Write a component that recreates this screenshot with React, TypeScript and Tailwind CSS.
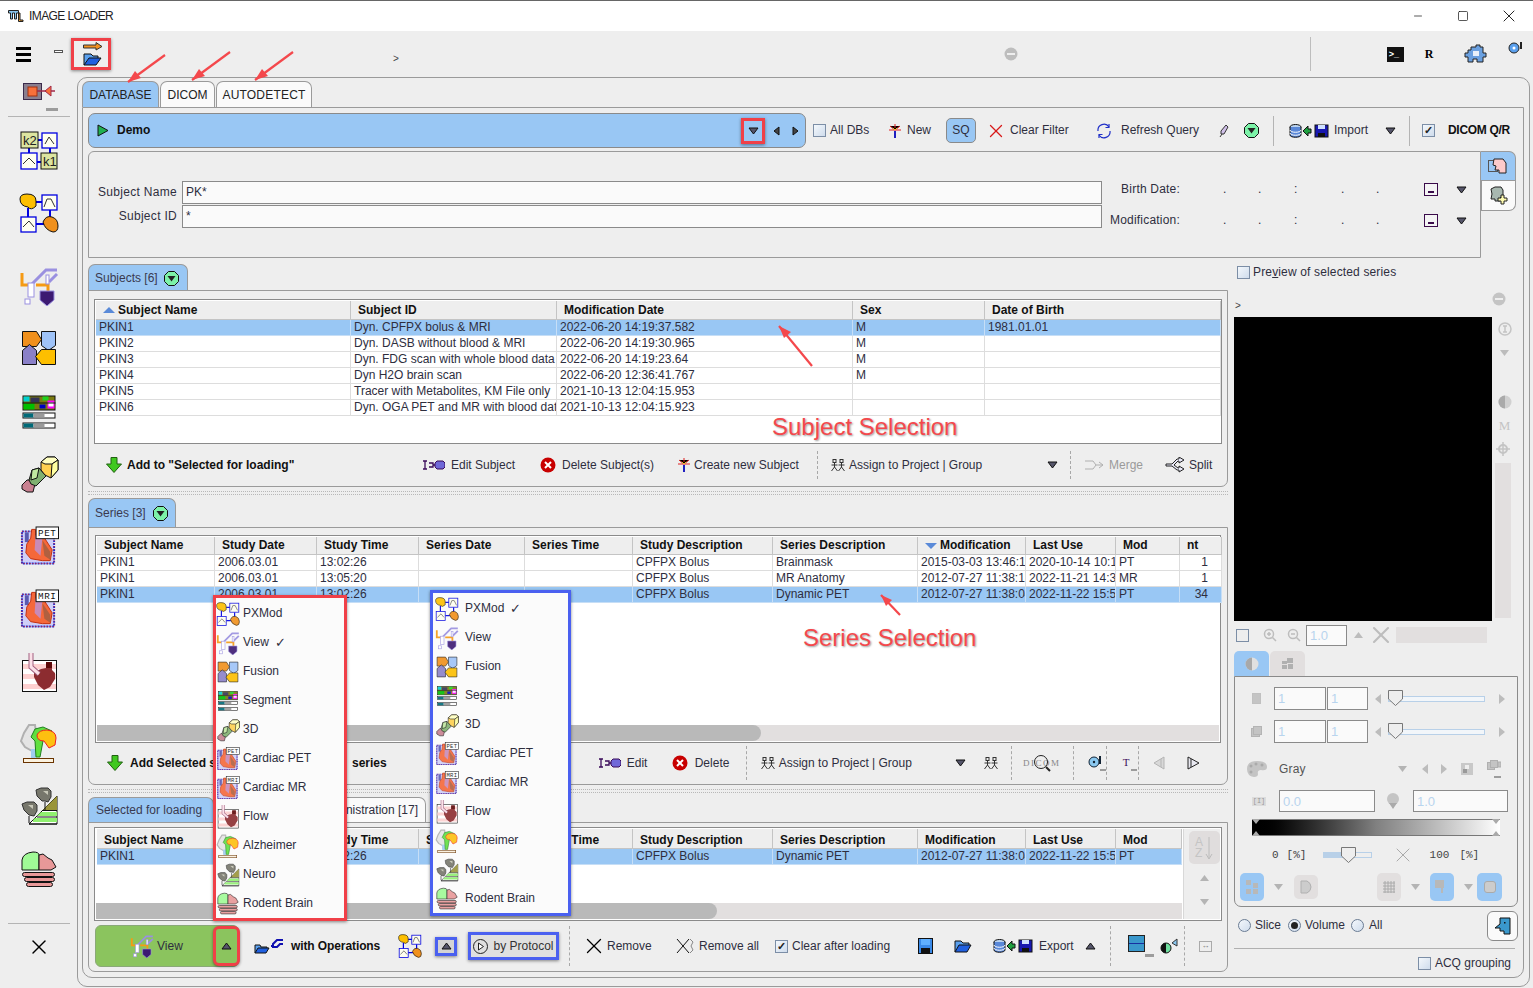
import { Minus, Square, X } from "lucide-react";
import type { ReactNode } from "react";

type IconProps = { s?: number };

/* ---------- module icons (drawn on a 40x40 box) ---------- */

function KinIcon({ s = 40 }: IconProps) {
  return (
    <svg width={s} height={s} viewBox="0 0 40 40">
      <path d="M18 10H23M10 18V24M31 18V24M18 32H23" stroke="#0000e0" strokeWidth="2" />
      <rect x="2" y="2" width="17" height="16" fill="#dde5a0" stroke="#111" />
      <rect x="23" y="3" width="15" height="15" fill="#fffff0" stroke="#0000e0" strokeWidth="1.3" />
      <rect x="2" y="23" width="16" height="16" fill="#fffff0" stroke="#0000e0" strokeWidth="1.3" />
      <rect x="22" y="23" width="16" height="16" fill="#dde5a0" stroke="#111" />
      <path d="M26 14L30 7L35 14M4 34L10 28L16 34" fill="none" stroke="#333" />
      <text x="4" y="15" fontSize="13" fontFamily="Liberation Sans" fill="#222">k2</text>
      <text x="24" y="36" fontSize="13" fontFamily="Liberation Sans" fill="#222">k1</text>
    </svg>
  );
}

function PxModIcon({ s = 40 }: IconProps) {
  return (
    <svg width={s} height={s} viewBox="0 0 40 40">
      <path d="M17 9H24M9 15V25M31 17V25M17 31H25" stroke="#0000e0" strokeWidth="2" />
      <path d="M1 6Q1 1 8 1Q17 1 17 8L17 13Q12 18 9 14Q1 13 1 6Z" fill="#fdbf00" stroke="#111" />
      <rect x="23" y="2" width="15" height="15" fill="#fffff0" stroke="#0000e0" strokeWidth="1.3" />
      <rect x="2" y="24" width="15" height="15" fill="#fffff0" stroke="#0000e0" strokeWidth="1.3" />
      <path d="M25 14L28 6H32L36 14M4 34L10 28L15 34" fill="none" stroke="#333" />
      <path d="M24 29Q27 22 33 24Q39 26 39 33Q39 39 34 39Q26 37 24 29Z" fill="#f0901c" stroke="#111" />
    </svg>
  );
}

function ViewIcon({ s = 40 }: IconProps) {
  return (
    <svg width={s} height={s} viewBox="0 0 40 40">
      <path d="M3 7V19H12M17 19H29V26" fill="none" stroke="#f59a14" strokeWidth="3" />
      <path d="M12 19L27 4H38" fill="none" stroke="#9a90e0" strokeWidth="3" />
      <path d="M38 8L30 16" stroke="#9a90e0" strokeWidth="3" />
      <rect x="9" y="17" width="6" height="14" fill="#fff" stroke="#9a90e0" />
      <rect x="27" y="9" width="3" height="9" fill="#fff" stroke="#9a90e0" />
      <rect x="6" y="33" width="5" height="5" fill="#fff" stroke="#9a90e0" />
      <path d="M21 25H35V34L28 40L21 34Z" fill="#3c1a72" stroke="#9a90e0" />
    </svg>
  );
}

function FusionIcon({ s = 40 }: IconProps) {
  return (
    <svg width={s} height={s} viewBox="-3.5 -3.5 40 40">
      <g stroke="#111">
        <path d="M0 0H14L19 8L14 15H0Z" fill="#f0901c" />
        <path d="M19 0H33V14L26 19L19 14Z" fill="#9fc3f8" />
        <path d="M0 19L7 13L14 19V33H0Z" fill="#8a80c8" />
        <path d="M19 18H33V33H19L13 25Z" fill="#fdbf00" />
      </g>
    </svg>
  );
}

function SegmentIcon({ s = 40 }: IconProps) {
  return (
    <svg width={s} height={s} viewBox="-3.5 -3.5 40 40">
      <rect x="0.5" y="0.5" width="32" height="14" fill="#7a7a10" stroke="#111" />
      <rect x="1" y="1" width="6" height="5" fill="#00d0d0" />
      <rect x="8" y="2" width="9" height="5" fill="#335" />
      <rect x="20" y="1" width="6" height="4" fill="#20d020" />
      <rect x="25" y="5" width="7" height="8" fill="#f0f" />
      <rect x="26" y="7" width="5" height="4" fill="#fff" />
      <rect x="1" y="8" width="11" height="6" fill="#00c000" />
      <rect x="17" y="9" width="6" height="4" fill="#0000c0" />
      <path d="M0 7.5H33" stroke="#111" />
      <g stroke="#111">
        <rect x="0.5" y="17.5" width="32" height="5" fill="#fff" />
        <rect x="0.5" y="27.5" width="32" height="5" fill="#fff" />
      </g>
      <rect x="1" y="18" width="10" height="4" fill="#006a78" />
      <rect x="11" y="18" width="11" height="4" fill="#9a9a9a" />
      <rect x="1" y="28" width="10" height="4" fill="#006a78" />
      <rect x="11" y="28" width="11" height="4" fill="#9a9a9a" />
    </svg>
  );
}

function ThreeDIcon({ s = 40 }: IconProps) {
  return (
    <svg width={s} height={s} viewBox="0 0 40 40">
      <g stroke="#111">
        <path d="M3 31L8 26H12L16 30L14 38H8L3 35Z" fill="#c88090" />
        <path d="M10 26L13 16L20 14L27 22L17 32L12 30Z" fill="#80b070" />
        <path d="M13 16L20 14L18 24L12 26Z" fill="#c0e8a0" />
        <path d="M22 8L28 3H36L39 6V16L32 24L26 21L22 16Z" fill="#ffd050" />
        <path d="M22 8L28 3H36L39 6L33 10L26 10Z" fill="#ffffc0" />
        <path d="M33 10L39 6V16L32 24Z" fill="#ffffa0" />
      </g>
    </svg>
  );
}

function HeartBody() {
  return (
    <g>
      <rect x="3" y="5" width="33" height="33" fill="#cfcff8" stroke="#2030d0" strokeWidth="2" strokeDasharray="2 1" />
      <rect x="3" y="5" width="33" height="33" fill="none" stroke="#e02020" strokeWidth="1" strokeDasharray="1 2" />
      <rect x="6" y="6" width="4" height="10" fill="#5a5ab0" />
      <path d="M13 3H17V12L25 10L34 24L32 35H24L12 33L7 27L8 18L12 12Z" fill="#f5683a" stroke="#c03010" />
      <path d="M17 9L24 12L22 30L16 24Z" fill="#c88ab8" />
      <path d="M24 14L32 26V34L26 30Z" fill="#b06040" />
    </g>
  );
}

function CardiacIcon({ s = 40, label }: IconProps & { label: string }) {
  return (
    <svg width={s} height={s} viewBox="0 0 41 40">
      <HeartBody />
      <rect x="17.5" y="0.5" width="23" height="12" fill="#fff" stroke="#111" />
      <text x="29" y="10" textAnchor="middle" fontSize="9.5" letterSpacing="0.6" fontFamily="Liberation Mono" fill="#111">{label}</text>
    </svg>
  );
}

function FlowIcon({ s = 40 }: IconProps) {
  return (
    <svg width={s} height={s} viewBox="0 0 40 40">
      <rect x="3.5" y="7.5" width="34" height="31" fill="#fff" stroke="#111" />
      <path d="M4 11H37V16H4ZM4 21H37V26H4ZM4 31H37V36H4Z" fill="#fdd0d0" />
      <path d="M15 19L22 16L27 15V9H33V17L36 20V26L31 34L25 37L19 32L15 24Z" fill="#8c2c30" />
      <rect x="27" y="9" width="6" height="6" fill="#5c0808" />
      <path d="M12 0V14L20 21" fill="none" stroke="#a06080" strokeWidth="5" />
      <path d="M12 0V14L20 21" fill="none" stroke="#fbe0e8" strokeWidth="3" />
    </svg>
  );
}

function AlzIcon({ s = 40 }: IconProps) {
  return (
    <svg width={s} height={s} viewBox="0 0 40 40">
      <path d="M10 2H16L20 32H13V28L6 24L2 18L5 10Z" fill="#e4e4e4" stroke="#b0b0b0" strokeWidth="2" />
      <rect x="12" y="26" width="5" height="9" fill="#a0ccf0" />
      <path d="M16 6L24 4L33 8L24 18L21 34H17L16 18L12 14Z" fill="#60e040" stroke="#208020" />
      <path d="M18 12Q20 7 28 7Q37 8 37 15L36 22L30 25L25 18Q18 18 18 12Z" fill="#fdc010" stroke="#f02020" />
      <rect x="4.5" y="35.5" width="30" height="4" fill="#fbf2e0" stroke="#6a3400" />
    </svg>
  );
}

function NeuroIcon({ s = 40 }: IconProps) {
  return (
    <svg width={s} height={s} viewBox="-2 0 40 40">
      <path d="M8 38L36 10V38Z" fill="#fff" stroke="#111" />
      <path d="M22 24L36 10V24Z" fill="#9a9438" />
      <path d="M20 26H36V30H16ZM12 34L14 32H36V36H12Z" fill="#90f070" />
      <path d="M8 38H36M16 31H36M22 24.5H36" stroke="#111" />
      <path d="M24 16V24M8 30V37" stroke="#111" />
      <path d="M15 4L20 2H27L30 5V11L27 16L24 15L21 15L16 10Z" fill="#77776c" stroke="#333" />
      <path d="M1 18L6 16H13L16 19V25L13 30L8 29L3 24Z" fill="#77776c" stroke="#333" />
      <path d="M22 5H27V9ZM7 19H12V23Z" fill="#c8c8b8" />
    </svg>
  );
}

function RodentIcon({ s = 40 }: IconProps) {
  return (
    <svg width={s} height={s} viewBox="0 0 40 40">
      <path d="M3 20V10Q4 3 14 2Q20 2 20 5L20 20Z" fill="#a0fa96" stroke="#111" />
      <path d="M20 5L24 4L29 8L33 10L37 17L32 20H20Z" fill="#e89898" stroke="#111" />
      <g fill="#e89898" stroke="#111">
        <rect x="3.5" y="22.5" width="32" height="4" rx="2" />
        <rect x="5.5" y="27.5" width="30" height="4" rx="2" />
        <rect x="7.5" y="32.5" width="26" height="4" rx="2" />
      </g>
    </svg>
  );
}

function ImportModuleIcon() {
  return (
    <svg width="34" height="20" viewBox="0 0 34 20">
      <rect x="0.5" y="0.5" width="18" height="16" fill="#8a7f8f" stroke="#3a2a4a" />
      <rect x="5" y="4" width="9" height="9" fill="#f8703a" stroke="#a03010" />
      <path d="M14 8H32" stroke="#a02848" strokeWidth="1.5" />
      <path d="M22 8L28 3V13Z" fill="#f8703a" stroke="#a02848" />
    </svg>
  );
}

/* ---------- small toolbar icons ---------- */

function Tri({ up, cls = "fill-[#55556a] stroke-[#111]" }: { up?: boolean; cls?: string }) {
  return (
    <svg width="11" height="8" viewBox="0 0 11 8" className={cls}>
      <path d={up ? "M1 7H10L5.5 1Z" : "M1 1H10L5.5 7Z"} />
    </svg>
  );
}

function GreenDown() {
  return (
    <svg width="15" height="15" viewBox="0 0 15 15">
      <path d="M4.5 0.5H10.5L14.5 4.5V10.5L10.5 14.5H4.5L0.5 10.5V4.5Z" fill="#7cf2a8" stroke="#111" />
      <path d="M3.5 5H11.5L7.5 10.5Z" fill="#222" />
    </svg>
  );
}

function StarNew() {
  return (
    <svg width="12" height="14" viewBox="0 0 12 14">
      <path d="M6 7V14" stroke="#2020c0" strokeWidth="2" />
      <path d="M6 0V6M1 2L6 6L11 2M0 6H12" stroke="#e02020" />
      <path d="M4 4L6 6L8 4" stroke="#f0c020" />
    </svg>
  );
}

function EditPlug() {
  return (
    <svg width="23" height="10" viewBox="0 0 23 10">
      <path d="M1 1H5M3 1V9M1 9H5M7 3H11V7H7M11 5H13" fill="none" stroke="#3a0a5a" strokeWidth="1.3" />
      <path d="M13 3L15 1H21L23 3V7L21 9H15L13 7Z" fill="#7068d8" stroke="#3a0a5a" />
    </svg>
  );
}

function DeleteRed() {
  return (
    <svg width="16" height="16" viewBox="0 0 16 16">
      <circle cx="8" cy="8" r="7.5" fill="#c80000" />
      <path d="M5 5L11 11M11 5L5 11" stroke="#fff" strokeWidth="2" />
    </svg>
  );
}

function Persons() {
  return (
    <svg width="14" height="13" viewBox="0 0 14 13" fill="none" stroke="#333">
      <rect x="2" y="0.5" width="3" height="3" />
      <rect x="9" y="0.5" width="3" height="3" />
      <path d="M3.5 4V8M0.5 12L3.5 8L6.5 12M0.5 6H6.5M10.5 4V8M7.5 12L10.5 8L13.5 12M7.5 6H13.5" />
    </svg>
  );
}

function GreenArrowDown() {
  return (
    <svg width="16" height="16" viewBox="0 0 16 16">
      <path d="M5 0.5H11V7H15.5L8 15.5L0.5 7H5Z" fill="#40c820" stroke="#206010" />
    </svg>
  );
}

function DbToSave() {
  return (
    <svg width="40" height="14" viewBox="0 0 40 14">
      <ellipse cx="6.5" cy="3" rx="5.5" ry="2.5" fill="#bcd4f0" stroke="#111" />
      <path d="M1 3V11C1 14 12 14 12 11V3" fill="#5a88d8" stroke="#111" />
      <path d="M1 6C1 9 12 9 12 6M1 9C1 12 12 12 12 9" fill="none" stroke="#fff" />
      <path d="M14 7L19 2V5H22V9H19V12Z" fill="#20a040" stroke="#111" />
      <rect x="26" y="1" width="13" height="12" fill="#1818b0" stroke="#111" />
      <rect x="29" y="1" width="7" height="4" fill="#cfe0ff" />
      <rect x="29" y="9" width="7" height="4" fill="#111" />
    </svg>
  );
}

function SaveIcon() {
  return (
    <svg width="15" height="16" viewBox="0 0 15 16">
      <rect x="0.5" y="0.5" width="14" height="15" fill="#3a8ae8" stroke="#111" />
      <rect x="3" y="1" width="9" height="6" fill="#60b0ff" />
      <rect x="3" y="10" width="9" height="5" fill="#111" />
    </svg>
  );
}

function FolderIcon({ w = 18, h = 14 }: { w?: number; h?: number }) {
  return (
    <svg width={w} height={h} viewBox="0 0 18 14">
      <path d="M1 13V2H7L9 4H15V7" fill="#5aa0ee" stroke="#111" />
      <path d="M1 13L5 6H17L13 13Z" fill="#2060e0" stroke="#111" />
    </svg>
  );
}

function MainOpenIcon() {
  return (
    <svg width="20" height="24" viewBox="0 0 20 24">
      <path d="M0.5 3H13V0.5L19 4.5L13 8V6H0.5Z" fill="#f09020" stroke="#333" />
      <path d="M1 23V12H8L10 14H15V17" fill="#5aa0ee" stroke="#111" />
      <path d="M1 23L6 16H18L13 23Z" fill="#2060e0" stroke="#111" />
    </svg>
  );
}

function AppLogo() {
  return (
    <svg width="16" height="12" viewBox="0 0 16 12" fill="#8ac4ec" stroke="#222">
      <path d="M0.5 0.5H10.5V3H8.5V9H6.5V3H4.5V9H2.5V3H0.5Z" />
      <path d="M10.5 3H12V10H15V11.5H10.5Z" fill="#f5a030" />
    </svg>
  );
}

/* ---------- form bits ---------- */

function Check({ on }: { on?: boolean }) {
  return (
    <span className="flex h-[13px] w-[13px] shrink-0 items-center justify-center border border-[#7c8ea6] bg-gradient-to-br from-[#f4f8fc] to-[#cfdcec] text-[11px] font-bold leading-none text-[#222]">
      {on ? "✓" : ""}
    </span>
  );
}

function Radio({ on }: { on?: boolean }) {
  return (
    <span className="flex h-[13px] w-[13px] shrink-0 items-center justify-center rounded-full border border-[#6a7c94] bg-gradient-to-br from-[#f4f8fc] to-[#cfdcec]">
      {on ? <span className="h-[7px] w-[7px] rounded-full bg-[#222]" /> : null}
    </span>
  );
}

function NumInput({ value, cls }: { value: string; cls: string }) {
  return (
    <span className={`flex items-center border border-[#8a8a8a] bg-[#fafafa] pl-[3px] text-[13px] text-[#b8d4ee] ${cls}`}>
      {value}
    </span>
  );
}

function Slider({ w = "w-[97px]" }: { w?: string }) {
  return (
    <span className={`relative flex h-[18px] items-center ${w}`}>
      <span className="h-[6px] w-full border border-[#b8d0e8] bg-[#f2f6fa]" />
      <svg width="15" height="16" viewBox="0 0 15 16" className="absolute left-0 top-0">
        <path d="M0.5 0.5H14.5V9L7.5 15.5L0.5 9Z" fill="#eeeeee" stroke="#777" />
      </svg>
    </span>
  );
}

/* ---------- tables ---------- */

function HeadCell({ children, sort, h }: { children?: ReactNode; sort?: "up" | "down"; h: string }) {
  return (
    <div className={`flex items-center overflow-hidden whitespace-nowrap border-b border-r border-[#c4c4c4] bg-[#eeeeee] pl-[7px] font-bold text-[#111] ${h}`}>
      {sort ? (
        <svg width="12" height="8" viewBox="0 0 12 8" className="mr-[3px] shrink-0 fill-[#5a8ad8]">
          <path d={sort === "up" ? "M0 7H12L6 1Z" : "M0 1H12L6 7Z"} />
        </svg>
      ) : null}
      {children}
    </div>
  );
}

function Cell({ children, sel, cls = "pr-px" }: { children?: ReactNode; sel?: boolean; cls?: string }) {
  return (
    <div
      className={`h-[16px] overflow-hidden whitespace-nowrap border-b border-r pl-[3px] leading-[15px] ${cls} ${
        sel ? "border-[#c6def6] bg-[#99c7f4]" : "border-[#dddddd] bg-white"
      }`}
    >
      {children}
    </div>
  );
}

const subjects = [
  ["PKIN1", "Dyn. CPFPX bolus & MRI", "2022-06-20 14:19:37.582", "M", "1981.01.01"],
  ["PKIN2", "Dyn. DASB without blood & MRI", "2022-06-20 14:19:30.965", "M", ""],
  ["PKIN3", "Dyn. FDG scan with whole blood data", "2022-06-20 14:19:23.64", "M", ""],
  ["PKIN4", "Dyn H2O brain scan", "2022-06-20 12:36:41.767", "M", ""],
  ["PKIN5", "Tracer with Metabolites, KM File only", "2021-10-13 12:04:15.953", "", ""],
  ["PKIN6", "Dyn. OGA PET and MR with blood data", "2021-10-13 12:04:15.923", "", ""],
];

const series = [
  ["PKIN1", "2006.03.01", "13:02:26", "", "", "CPFPX Bolus", "Brainmask", "2015-03-03 13:46:13", "2020-10-14 10:11", "PT", "1"],
  ["PKIN1", "2006.03.01", "13:05:20", "", "", "CPFPX Bolus", "MR Anatomy", "2012-07-27 11:38:13", "2022-11-21 14:33", "MR", "1"],
  ["PKIN1", "2006.03.01", "13:02:26", "", "", "CPFPX Bolus", "Dynamic PET", "2012-07-27 11:38:04", "2022-11-22 15:50", "PT", "34"],
];

function SubjectTable() {
  const heads = ["Subject Name", "Subject ID", "Modification Date", "Sex", "Date of Birth"];
  return (
    <div className="h-[145px] border border-[#8a8a8a] bg-white p-px">
      <div className="grid grid-cols-[255px_206px_296px_132px_236px]">
        {heads.map((h, i) => (
          <HeadCell key={h} h="h-[19px]" sort={i === 0 ? "up" : undefined}>{h}</HeadCell>
        ))}
        {subjects.map((row, r) =>
          row.map((c, i) => <Cell key={`${r}-${i}`} sel={r === 0}>{c}</Cell>)
        )}
      </div>
    </div>
  );
}

function Scrollbar({ thumb }: { thumb: string }) {
  return (
    <div className="h-[16px] bg-[#e2dfdf]">
      <div className={`h-full rounded-r-full bg-[#b9b9b9] ${thumb}`} />
    </div>
  );
}

function SeriesTable() {
  const heads = ["Subject Name", "Study Date", "Study Time", "Series Date", "Series Time", "Study Description", "Series Description", "Modification", "Last Use", "Mod", "nt"];
  return (
    <div className="flex h-[208px] flex-col border border-[#8a8a8a] bg-white p-px">
      <div className="grid grid-cols-[118px_102px_102px_106px_108px_140px_145px_108px_90px_64px_42px]">
        {heads.map((h) => (
          <HeadCell key={h} h="h-[18px]" sort={h === "Modification" ? "down" : undefined}>{h}</HeadCell>
        ))}
        {series.map((row, r) =>
          row.map((c, i) => (
            <Cell key={`${r}-${i}`} sel={r === 2} cls={i === 10 ? "pr-[13px] text-right" : "pr-px"}>{c}</Cell>
          ))
        )}
      </div>
      <div className="flex-1" />
      <Scrollbar thumb="w-[664px]" />
    </div>
  );
}

function LoadTable() {
  const heads = ["Subject Name", "Study Date", "Study Time", "Series Date", "Series Time", "Study Description", "Series Description", "Modification", "Last Use", "Mod"];
  const row = ["PKIN1", "2006.03.01", "13:02:26", "", "", "CPFPX Bolus", "Dynamic PET", "2012-07-27 11:38:04", "2022-11-22 15:50", "PT"];
  return (
    <div className="flex h-[94px] border border-[#8a8a8a] bg-white p-px">
      <div className="flex w-[1086px] flex-col">
        <div className="grid grid-cols-[118px_102px_102px_106px_108px_140px_145px_108px_90px_66px] pl-px">
          {heads.map((h) => <HeadCell key={h} h="h-[20px] pt-[3px]">{h}</HeadCell>)}
          {row.map((c, i) => <Cell key={i} sel>{c}</Cell>)}
        </div>
        <div className="flex-1" />
        <Scrollbar thumb="w-[621px]" />
      </div>
      <div className="ml-[1px] flex flex-1 flex-col items-center border-l border-[#d8d8d8] bg-[#eeeeee] pl-[4px] pt-[2px]">
        <div className="flex h-[33px] w-[31px] items-center justify-center rounded-[5px] bg-[#e0dddd]">
          <span className="flex flex-col text-[12px] leading-[11px] text-[#c4c4c4]">
            <span>A</span>
            <span>Z</span>
          </span>
          <svg width="8" height="24" viewBox="0 0 8 24" fill="none" stroke="#bcbcbc" className="ml-[2px]">
            <path d="M4 1V22M1 18L4 23L7 18" />
          </svg>
        </div>
        <span className="mt-[10px] flex"><Tri up cls="fill-[#b4b4b4]" /></span>
        <span className="mt-[16px] flex"><Tri cls="fill-[#b4b4b4]" /></span>
      </div>
    </div>
  );
}

/* ---------- app parts ---------- */

function TabBlue({ children, cls = "" }: { children: ReactNode; cls?: string }) {
  return (
    <div className={`flex items-center rounded-t-[7px] border border-b-0 border-[#9a9a9a] bg-[#99c7f4] ${cls}`}>
      {children}
    </div>
  );
}

function TabWhite({ children, cls = "" }: { children: ReactNode; cls?: string }) {
  return (
    <div className={`flex items-center rounded-t-[7px] border border-b-0 border-[#9a9a9a] bg-[#fafafa] ${cls}`}>
      {children}
    </div>
  );
}

function Splitter({ cls }: { cls: string }) {
  return (
    <div className={`flex items-center ${cls}`}>
      <div className="h-[4px] w-full border-b border-t border-dotted border-[#b8b8b8]" />
    </div>
  );
}

function Sep({ cls = "h-[34px]" }: { cls?: string }) {
  return <div className={`w-0 border-l border-dashed border-[#a8a8a8] ${cls}`} />;
}

function Dash({ cls = "" }: { cls?: string }) {
  return <span className={`block h-[3px] w-[8px] bg-[#9c9c9c] ${cls}`} />;
}

const moduleIcons = [
  { name: "PXMod", Icon: PxModIcon },
  { name: "View", Icon: ViewIcon },
  { name: "Fusion", Icon: FusionIcon },
  { name: "Segment", Icon: SegmentIcon },
  { name: "3D", Icon: ThreeDIcon },
  { name: "Cardiac PET", Icon: (p: IconProps) => <CardiacIcon {...p} label="PET" /> },
  { name: "Cardiac MR", Icon: (p: IconProps) => <CardiacIcon {...p} label="MRI" /> },
  { name: "Flow", Icon: FlowIcon },
  { name: "Alzheimer", Icon: AlzIcon },
  { name: "Neuro", Icon: NeuroIcon },
  { name: "Rodent Brain", Icon: RodentIcon },
];

function ModuleMenu({ cls, checked, iconCol }: { cls: string; checked: string; iconCol: string }) {
  return (
    <div className={`absolute flex flex-col border-[3px] bg-[#fbfbfb] pt-px shadow-[0_1px_3px_rgba(0,0,0,0.45)] ${cls}`}>
      {moduleIcons.map(({ name, Icon }) => (
        <div key={name} className="flex h-[29px] items-center">
          <span className={`flex shrink-0 items-center opacity-90 ${iconCol}`}>
            <Icon s={24} />
          </span>
          <span>{name}</span>
          {name === checked ? <span className="ml-[6px] text-[13px]">✓</span> : null}
        </div>
      ))}
    </div>
  );
}

function TitleBar() {
  return (
    <div className="flex h-[31px] shrink-0 items-center border-t border-[#666] bg-white pl-[8px] pr-[14px]">
      <AppLogo />
      <span className="ml-[5px] tracking-[-0.6px] text-[#222]">IMAGE LOADER</span>
      <span className="flex-1" />
      <Minus size={12} strokeWidth={1.4} className="text-[#111]" />
      <span className="ml-[33px]"><Square size={12} strokeWidth={1.4} className="text-[#111]" /></span>
      <span className="ml-[30px]"><X size={20} strokeWidth={1.1} className="text-[#111]" /></span>
    </div>
  );
}

function TopBar() {
  return (
    <div className="flex h-[46px] shrink-0 items-center pl-[16px]">
      <div className="flex w-[15px] flex-col gap-[3px]">
        <span className="h-[3px] bg-black" />
        <span className="h-[3px] bg-black" />
        <span className="h-[3px] bg-black" />
      </div>
      <span className="mb-[6px] ml-[23px] block h-[3px] w-[9px] border border-[#555] bg-white" />
      <div className="ml-[8px] flex h-[32px] w-[40px] items-center justify-center border-[3px] border-[#f04048] bg-[#eeeeee] pl-[4px] shadow-[0_1px_3px_rgba(0,0,0,0.45)]">
        <MainOpenIcon />
      </div>
      <span className="ml-[282px] mt-[9px] text-[10px] text-[#444]">&gt;</span>
      <svg width="14" height="14" viewBox="0 0 14 14" className="ml-[605px]">
        <circle cx="7" cy="7" r="6.5" fill="#bdbdbd" />
        <rect x="3" y="6" width="8" height="2" fill="#eee" />
      </svg>
      <div className="ml-[292px] h-[34px] w-0 border-l border-[#bdbdbd]" />
      <span className="ml-[76px] flex h-[15px] w-[17px] items-center bg-[#111] pl-[2px] text-[9px] font-bold leading-none text-white">&gt;_</span>
      <span className="ml-[21px] font-['Liberation_Serif',serif] text-[12px] font-bold text-black">R</span>
      <svg width="26" height="20" viewBox="0 0 26 20" className="ml-[29px]">
        <path d="M8 3H13V1H17V3H20V9H23V13H20V18H14V15H10V18H5V13H2V9H5V6H8Z" fill="#6aa0e0" stroke="#222" />
        <path d="M10 7H16V12H10Z" fill="#e8f0fa" />
      </svg>
      <svg width="16" height="16" viewBox="0 0 16 16" className="mb-[12px] ml-[19px]">
        <circle cx="6" cy="8" r="5" fill="#5aa0ee" stroke="#222" />
        <circle cx="6" cy="8" r="1.5" fill="#fff" />
        <rect x="12" y="2" width="2" height="7" fill="#222" />
      </svg>
    </div>
  );
}

function Sidebar() {
  return (
    <div className="flex w-[77px] shrink-0 flex-col items-center">
      <div className="flex h-[31px] w-full items-center pl-[23px]"><ImportModuleIcon /></div>
      <Dash cls="ml-[26px] !w-[12px]" />
      <div className="mt-[5px] h-px w-[62px] bg-[#b4b4b4]" />
      <div className="mt-[13px]"><KinIcon /></div>
      <div className="mt-[23px]"><PxModIcon /></div>
      <div className="mt-[33px]"><ViewIcon /></div>
      <div className="mt-[22px]"><FusionIcon /></div>
      <div className="mt-[24px]"><SegmentIcon /></div>
      <div className="mt-[22px]"><ThreeDIcon /></div>
      <div className="mt-[32px]"><CardiacIcon label="PET" /></div>
      <div className="mt-[23px]"><CardiacIcon label="MRI" /></div>
      <div className="mt-[24px]"><FlowIcon /></div>
      <div className="mt-[30px]"><AlzIcon /></div>
      <div className="mt-[23px]"><NeuroIcon /></div>
      <div className="mt-[24px]"><RodentIcon /></div>
      <div className="mt-[33px] h-px w-[62px] bg-[#b4b4b4]" />
      <X size={24} strokeWidth={1.4} className="mt-[11px] text-black" />
    </div>
  );
}

function DemoRow() {
  return (
    <div className="flex h-[35px] items-center">
      <div className="flex h-full w-[718px] shrink-0 items-center rounded-[7px] border border-[#8a8a8a] bg-[#99c7f4] pl-[8px]">
        <svg width="12" height="13" viewBox="0 0 12 13"><path d="M1 1L11 6.5L1 12Z" fill="#20b050" stroke="#111" /></svg>
        <span className="ml-[8px] font-bold text-[#111]">Demo</span>
        <span className="flex-1" />
        <div className="flex h-[26px] w-[24px] items-center justify-center border-[3px] border-[#f04048] bg-[#99c7f4] shadow-[0_1px_3px_rgba(0,0,0,0.45)]">
          <Tri />
        </div>
        <svg width="7" height="10" viewBox="0 0 7 10" className="ml-[8px]"><path d="M6 1V9L1 5Z" fill="#444" stroke="#111" /></svg>
        <svg width="7" height="10" viewBox="0 0 7 10" className="ml-[12px] mr-[6px]"><path d="M1 1V9L6 5Z" fill="#444" stroke="#111" /></svg>
      </div>
      <div className="ml-[7px]"><Check /></div>
      <span className="ml-[4px] w-[45px]">All DBs</span>
      <span className="ml-[14px] flex"><StarNew /></span>
      <span className="ml-[6px] w-[30px]">New</span>
      <span className="ml-[9px] flex h-[25px] w-[30px] items-center justify-center rounded-[5px] border border-[#8a8a8a] bg-[#99c7f4]">SQ</span>
      <X size={22} strokeWidth={1.4} className="ml-[9px] text-[#d81818]" />
      <span className="ml-[3px] w-[70px]">Clear Filter</span>
      <svg width="16" height="16" viewBox="0 0 16 16" fill="none" stroke="#2030c8" strokeWidth="1.2" className="ml-[16px]">
        <path d="M2 8A6 6 0 0 1 13 4M14 8A6 6 0 0 1 3 12" />
        <path d="M13 1V4.5H9.5M3 15V11.5H6.5" />
      </svg>
      <span className="ml-[9px] w-[84px]">Refresh Query</span>
      <svg width="10" height="14" viewBox="0 0 10 14" className="ml-[14px]"><path d="M7 1L9 3L5 10H2V7Z" fill="#d0c0e8" stroke="#333" /><path d="M1 13L3 10" stroke="#333" /></svg>
      <span className="ml-[15px] flex"><GreenDown /></span>
      <div className="ml-[14px] h-[30px] w-0 border-l border-[#b4b4b4]" />
      <span className="ml-[15px] flex"><DbToSave /></span>
      <span className="ml-[5px] w-[40px]">Import</span>
      <span className="ml-[11px] flex"><Tri /></span>
      <div className="ml-[13px] h-[30px] w-0 border-l border-[#b4b4b4]" />
      <div className="ml-[12px]"><Check on /></div>
      <span className="ml-[13px] font-bold tracking-[-0.3px] text-[#111]">DICOM Q/R</span>
    </div>
  );
}

function DateRow({ label, cls }: { label: string; cls: string }) {
  return (
    <div className={`flex h-[15px] items-center ${cls}`}>
      <span className="w-[82px] pr-[5px] text-right tracking-[0.2px]">{label}</span>
      <span className="ml-[38px] w-[35px]">.</span>
      <span className="w-[36px]">.</span>
      <span className="w-[47px]">:</span>
      <span className="w-[35px]">.</span>
      <span className="w-[48px]">.</span>
      <span className="flex h-[13px] w-[14px] items-end justify-center border border-[#3a0a4a] bg-[#f4f4f4] pb-[2px]">
        <span className="h-[2px] w-[6px] bg-[#3a0a4a]" />
      </span>
      <span className="ml-[18px] flex"><Tri /></span>
    </div>
  );
}

function FilterRow() {
  return (
    <div className="mt-[3px] flex h-[107px]">
      <div className="flex w-[1393px] shrink-0 rounded-tl-[6px] border border-[#9a9a9a] bg-[#eeeeee]">
        <div className="flex w-[1014px] flex-col pt-[29px]">
          <div className="flex h-[23px] items-center">
            <span className="w-[88px] text-right tracking-[0.3px]">Subject Name</span>
            <span className="ml-[5px] flex h-full w-[920px] items-center border border-[#8a8a8a] bg-[#fafafa] pl-[3px]">PK*</span>
          </div>
          <div className="mt-px flex h-[23px] items-center">
            <span className="w-[88px] text-right tracking-[0.3px]">Subject ID</span>
            <span className="ml-[5px] flex h-full w-[920px] items-center border border-[#8a8a8a] bg-[#fafafa] pl-[3px]">*</span>
          </div>
        </div>
        <div className="pt-[30px]">
          <DateRow label="Birth Date:" cls="" />
          <DateRow label="Modification:" cls="mt-[16px]" />
        </div>
      </div>
      <div className="flex w-[35px] flex-col">
        <div className="flex h-[30px] items-center justify-center rounded-tr-[7px] border border-l-0 border-[#9a9a9a] bg-[#99c7f4]">
          <svg width="20" height="18" viewBox="0 0 20 18">
            <rect x="0.5" y="3.5" width="9" height="11" fill="none" stroke="#555" />
            <path d="M6 2H15L18 6V16H11V13H7L8 9L5 8Z" fill="#fccaca" stroke="#222" />
          </svg>
        </div>
        <div className="flex h-[30px] items-center justify-center rounded-br-[7px] border border-t-0 border-[#9a9a9a] bg-[#fafafa]">
          <svg width="20" height="20" viewBox="0 0 20 20">
            <path d="M2 3L6 1H12L14 4V9L11 12V15H6V13H2L3 8Z" fill="#a8b8b0" stroke="#222" />
            <path d="M12 9H15V12H18V15H15V18H12V15H9V12H12Z" fill="#fffcb0" stroke="#222" />
          </svg>
        </div>
      </div>
    </div>
  );
}

function SubjectsPanel() {
  return (
    <>
      <TabBlue cls="h-[27px] w-[100px] pl-[6px]">
        <span className="text-[#3a3a50]">Subjects [6]</span>
        <span className="ml-[6px] flex"><GreenDown /></span>
      </TabBlue>
      <div className="-mt-px h-[197px] rounded-b-[7px] border border-[#9a9a9a] px-[5px] pt-[8px]">
        <SubjectTable />
        <div className="flex h-[42px] items-center pl-[12px]">
          <GreenArrowDown />
          <span className="ml-[5px] w-[175px] font-bold text-[#111]">Add to "Selected for loading"</span>
          <span className="ml-[120px] flex"><EditPlug /></span>
          <span className="ml-[6px] w-[66px]">Edit Subject</span>
          <span className="ml-[23px] flex"><DeleteRed /></span>
          <span className="ml-[6px] w-[96px]">Delete Subject(s)</span>
          <span className="ml-[20px] flex"><StarNew /></span>
          <span className="ml-[4px] w-[108px]">Create new Subject</span>
          <span className="ml-[15px]"><Sep cls="h-[28px]" /></span>
          <span className="ml-[13px] flex"><Persons /></span>
          <span className="ml-[4px] w-[135px]">Assign to Project | Group</span>
          <span className="ml-[63px] flex"><Tri /></span>
          <span className="ml-[12px]"><Sep cls="h-[28px]" /></span>
          <svg width="20" height="12" viewBox="0 0 20 12" fill="none" stroke="#b0b0b0" className="ml-[14px]">
            <path d="M0 2H8L11 6L8 10H0M11 6H18M14 3L18 6L14 9" />
          </svg>
          <span className="ml-[4px] w-[34px] text-[#9a9a9a]">Merge</span>
          <svg width="20" height="16" viewBox="0 0 20 16" fill="#e8e8f8" stroke="#222" className="ml-[22px]">
            <path d="M1 7H7L12 2H14V0L19 3L14 6V4H13L9 8L13 11H14V9L19 12L14 15V13H12L7 9H1Z" />
          </svg>
          <span className="ml-[4px]">Split</span>
        </div>
      </div>
    </>
  );
}

function SeriesPanel() {
  return (
    <>
      <TabBlue cls="h-[30px] w-[88px] pl-[6px]">
        <span className="text-[#3a3a50]">Series [3]</span>
        <span className="ml-[7px] flex"><GreenDown /></span>
      </TabBlue>
      <div className="-mt-px h-[258px] rounded-b-[7px] border border-[#9a9a9a] px-[6px] pt-[7px]">
        <SeriesTable />
        <div className="flex h-[40px] items-center pl-[12px]">
          <GreenArrowDown />
          <span className="ml-[7px] w-[222px] whitespace-nowrap font-bold text-[#111]">Add Selected series</span>
          <span className="font-bold text-[#111]">series</span>
          <span className="ml-[211px] flex"><EditPlug /></span>
          <span className="ml-[6px] w-[22px]">Edit</span>
          <span className="ml-[23px] flex"><DeleteRed /></span>
          <span className="ml-[7px] w-[36px]">Delete</span>
          <span className="ml-[15px]"><Sep /></span>
          <span className="ml-[14px] flex"><Persons /></span>
          <span className="ml-[4px] w-[135px] whitespace-nowrap">Assign to Project | Group</span>
          <span className="ml-[41px] flex"><Tri /></span>
          <span className="ml-[18px] flex"><Persons /></span>
          <span className="ml-[13px]"><Sep /></span>
          <span className="relative ml-[12px] flex h-[16px] w-[36px] items-center justify-center font-['Liberation_Serif',serif] text-[9px] tracking-[1.5px] text-[#888]">
            DICOM
            <svg width="18" height="18" viewBox="0 0 18 18" fill="none" stroke="#222" className="absolute left-[9px] top-[-1px]">
              <circle cx="8" cy="8" r="6.5" />
              <path d="M13 13L17 17" strokeWidth="2" />
            </svg>
          </span>
          <span className="ml-[13px]"><Sep /></span>
          <span className="ml-[14px] flex flex-col">
            <svg width="14" height="14" viewBox="0 0 14 14"><circle cx="6" cy="7" r="5" fill="#8ac8f0" stroke="#123" /><circle cx="6" cy="7" r="1.2" fill="#123" /><rect x="11" y="1" width="2" height="8" fill="#123" /></svg>
            <Dash cls="ml-[12px] !w-[6px] !h-[2px]" />
          </span>
          <span className="ml-[0px]"><Sep /></span>
          <span className="ml-[16px] flex flex-col font-['Liberation_Serif',serif] text-[11px] leading-[14px] text-[#3a0a5a]">
            T
            <Dash cls="ml-[8px] !w-[6px] !h-[2px]" />
          </span>
          <span className="ml-[1px]"><Sep /></span>
          <svg width="12" height="14" viewBox="0 0 12 14" fill="#d8d8d8" stroke="#b4b4b4" className="ml-[14px]"><path d="M11 1V13L1 7ZM8 3V11" /></svg>
          <svg width="13" height="14" viewBox="0 0 13 14" fill="#e8e8f0" stroke="#222" className="ml-[22px]"><path d="M1 1V13L12 7ZM4 3V11" /></svg>
        </div>
      </div>
    </>
  );
}

function LoadPanel() {
  return (
    <>
      <div className="flex h-[26px]">
        <TabBlue cls="w-[126px] pl-[7px]"><span className="text-[#3a3a50]">Selected for loading</span></TabBlue>
        <TabWhite cls="w-[212px] justify-end pr-[7px]"><span>Administration [17]</span></TabWhite>
      </div>
      <div className="-mt-px flex h-[150px] flex-col rounded-b-[7px] border border-[#9a9a9a] px-[5px] pt-[4px]">
        <LoadTable />
        <div className="flex flex-1 items-center pl-px">
          <div className="flex h-[42px] w-[144px] items-center rounded-[6px] border border-[#8aa878] bg-[#8bc45e]">
            <span className="ml-[34px] flex"><ViewIcon s={24} /></span>
            <span className="ml-[3px] w-[56px]">View</span>
            <span className="-mr-[2px] flex h-full w-[27px] shrink-0 items-center justify-center rounded-[6px] border-[3px] border-[#f04048] bg-[#8bc45e] shadow-[0_1px_3px_rgba(0,0,0,0.45)]">
              <Tri up />
            </span>
          </div>
          <svg width="30" height="16" viewBox="0 0 30 16" className="ml-[15px]">
            <path d="M1 15V7H6L7 9H13V11" fill="#5aa0ee" stroke="#111" />
            <path d="M1 15L4 10H15L12 15Z" fill="#2060e0" stroke="#111" />
            <path d="M29 2H23L19 6V9H23L26 6H29M17 8H20" fill="none" stroke="#1010b0" strokeWidth="2" />
          </svg>
          <span className="ml-[7px] w-[92px] whitespace-nowrap font-bold tracking-[-0.1px] text-[#111]">with Operations</span>
          <span className="ml-[15px] flex"><PxModIcon s={24} /></span>
          <span className="ml-[13px] flex h-[19px] w-[22px] items-center justify-center border-[3px] border-[#4a60f0] bg-[#d4d4d4] shadow-[0_1px_3px_rgba(0,0,0,0.45)]"><Tri up /></span>
          <span className="ml-[11px] flex h-[28px] w-[91px] items-center justify-center border-[3px] border-[#4a60f0] bg-[#e0e0e0] text-[#333] shadow-[0_1px_3px_rgba(0,0,0,0.45)]">
            <svg width="15" height="15" viewBox="0 0 15 15" fill="none" stroke="#222" className="mr-[5px] shrink-0">
              <circle cx="7.5" cy="7.5" r="7" />
              <path d="M5.5 4V11L10.5 7.5Z" fill="#fff" />
            </svg>
            by Protocol
          </span>
          <span className="ml-[10px]"><Sep cls="h-[40px]" /></span>
          <X size={26} strokeWidth={1.2} className="ml-[11px] text-black" />
          <span className="w-[46px]">Remove</span>
          <svg width="18" height="18" viewBox="0 0 18 18" fill="none" stroke="#111" className="ml-[23px]">
            <path d="M1 2L13 16M13 2L1 16" />
            <path d="M14 2L17 5L15 9L17 13L14 16" stroke="#888" />
          </svg>
          <span className="ml-[5px] w-[62px]">Remove all</span>
          <span className="ml-[14px]"><Check on /></span>
          <span className="ml-[4px] w-[102px] whitespace-nowrap">Clear after loading</span>
          <span className="ml-[24px] flex"><SaveIcon /></span>
          <span className="ml-[21px] flex"><FolderIcon /></span>
          <span className="ml-[21px] flex"><DbToSave /></span>
          <span className="ml-[6px] w-[34px]">Export</span>
          <span className="ml-[12px] flex"><Tri up /></span>
          <span className="ml-[14px]"><Sep cls="h-[40px]" /></span>
          <span className="mb-[6px] ml-[17px] flex h-[17px] w-[17px] flex-col border border-[#222] bg-[#3a98cc]">
            <span className="mt-[7px] h-px w-full bg-[#1830a0]" />
          </span>
          <Dash cls="mt-[18px] !w-[9px]" />
          <svg width="18" height="16" viewBox="0 0 18 16" className="ml-[6px]">
            <circle cx="6" cy="10" r="5" fill="#70e0a0" stroke="#111" />
            <path d="M6 5A5 5 0 0 0 6 15Z" fill="#111" />
            <path d="M12 5L17 1V8Z" fill="#8ac8f0" stroke="#333" />
          </svg>
          <span className="ml-[6px]"><Sep cls="h-[40px]" /></span>
          <span className="ml-[14px] flex h-[11px] w-[13px] items-center justify-center border border-[#aaa] text-[8px] leading-none text-[#777]">↔</span>
        </div>
      </div>
    </>
  );
}

function PreviewPanel() {
  return (
    <div className="ml-[6px] flex w-[286px] flex-col">
      <div className="mt-[7px] flex h-[15px] items-center pl-[3px]">
        <Check />
        <span className="ml-[3px] tracking-[0.15px]">Pre<span className="underline">v</span>iew of selected series</span>
      </div>
      <div className="flex h-[37px] items-center pl-px">
        <span className="mt-[13px] text-[10px] text-[#444]">&gt;</span>
        <span className="flex-1" />
        <svg width="14" height="14" viewBox="0 0 14 14" className="mr-[14px]">
          <circle cx="7" cy="7" r="6.5" fill="#c4c4c4" />
          <rect x="3" y="6" width="8" height="2" fill="#eee" />
        </svg>
      </div>
      <div className="flex h-[304px]">
        <div className="w-[258px] bg-black" />
        <div className="ml-[3px] flex w-[16px] flex-col items-center">
          <svg width="14" height="14" viewBox="0 0 14 14" fill="none" stroke="#c4c4c4" strokeWidth="1.5" className="ml-[3px] mt-[5px]"><circle cx="7" cy="7" r="6" /><path d="M5 4H9M7 4V10M5 10H9" /></svg>
          <span className="ml-[3px] mt-[13px] flex"><Tri cls="fill-[#bcbcbc]" /></span>
          <svg width="14" height="14" viewBox="0 0 14 14" className="ml-[3px] mt-[38px]"><circle cx="7" cy="7" r="6.5" fill="#d0d0d0" /><path d="M7 0.5A6.5 6.5 0 0 0 7 13.5Z" fill="#aaa" /></svg>
          <span className="ml-[3px] mt-[10px] font-['Liberation_Serif',serif] text-[13px] leading-[14px] text-[#c4c4c4]">M</span>
          <svg width="14" height="14" viewBox="0 0 14 14" fill="none" stroke="#c4c4c4" strokeWidth="2" className="mt-[9px]"><circle cx="7" cy="7" r="4" /><path d="M7 0V14M0 7H14" strokeWidth="1.5" /></svg>
          <div className="mt-[7px] h-[155px] w-full bg-[#e2dfdf]" />
        </div>
      </div>
      <div className="mt-[3px] flex h-[22px] items-center">
        <span className="ml-[2px] h-[13px] w-[13px] border border-[#7c8ea6]" />
        <svg width="14" height="14" viewBox="0 0 14 14" fill="none" stroke="#bdbdbd" strokeWidth="1.5" className="ml-[14px]"><circle cx="6" cy="6" r="4.5" /><path d="M9.5 9.5L13 13M4 6H8M6 4V8" /></svg>
        <svg width="14" height="14" viewBox="0 0 14 14" fill="none" stroke="#bdbdbd" strokeWidth="1.5" className="ml-[10px]"><circle cx="6" cy="6" r="4.5" /><path d="M9.5 9.5L13 13M4 6H8" /></svg>
        <NumInput value="1.0" cls="ml-[5px] h-[21px] w-[41px]" />
        <span className="ml-[6px] flex"><Tri up cls="fill-[#bcbcbc]" /></span>
        <X size={28} strokeWidth={1.8} className="ml-[3px] text-[#bdbdbd]" />
        <div className="ml-px h-[16px] w-[91px] bg-[#e2dfdf]" />
      </div>
      <div className="mt-[5px] flex h-[25px]">
        <div className="flex w-[35px] items-center justify-center rounded-t-[5px] bg-[#99c7f4]">
          <svg width="14" height="14" viewBox="0 0 14 14"><circle cx="7" cy="7" r="6.5" fill="#e0e0e0" /><path d="M7 0.5A6.5 6.5 0 0 0 7 13.5Z" fill="#a8a8a8" /></svg>
        </div>
        <div className="ml-px flex w-[35px] items-center justify-center rounded-t-[5px] bg-[#e2dfdf]">
          <svg width="11" height="11" viewBox="0 0 11 11" fill="#b0b0b0"><rect x="0" y="3" width="5" height="3" /><rect x="5" y="0" width="6" height="5" /><rect x="0" y="7" width="5" height="4" /><rect x="6" y="6" width="5" height="5" /></svg>
        </div>
      </div>
      <div className="flex h-[231px] w-[284px] flex-col rounded-b-[7px] border border-[#8a8a8a]">
        <div className="mt-[10px] flex h-[23px] items-center">
          <span className="ml-[17px] h-[11px] w-[9px] border border-[#c0c0c0] bg-[#c4c4c4]" />
          <NumInput value="1" cls="ml-[13px] h-[23px] w-[52px]" />
          <NumInput value="1" cls="ml-px h-[23px] w-[41px]" />
          <svg width="7" height="10" viewBox="0 0 7 10" fill="#bcbcbc" className="ml-[7px]"><path d="M6 0V10L0 5Z" /></svg>
          <span className="ml-[6px]"><Slider /></span>
          <svg width="7" height="10" viewBox="0 0 7 10" fill="#bcbcbc" className="ml-[14px]"><path d="M0 0V10L6 5Z" /></svg>
        </div>
        <div className="mt-[10px] flex h-[23px] items-center">
          <svg width="11" height="11" viewBox="0 0 11 11" fill="#c4c4c4" stroke="#b4b4b4" className="ml-[16px]"><rect x="0.5" y="2.5" width="8" height="8" /><rect x="2.5" y="0.5" width="8" height="8" /></svg>
          <NumInput value="1" cls="ml-[12px] h-[23px] w-[52px]" />
          <NumInput value="1" cls="ml-px h-[23px] w-[41px]" />
          <svg width="7" height="10" viewBox="0 0 7 10" fill="#bcbcbc" className="ml-[7px]"><path d="M6 0V10L0 5Z" /></svg>
          <span className="ml-[6px]"><Slider /></span>
          <svg width="7" height="10" viewBox="0 0 7 10" fill="#bcbcbc" className="ml-[14px]"><path d="M0 0V10L6 5Z" /></svg>
        </div>
        <div className="mt-[15px] flex h-[22px] items-center">
          <svg width="22" height="18" viewBox="0 0 22 18" className="ml-[11px]">
            <path d="M1 9Q1 1 11 1Q21 1 21 7Q21 11 15 10Q11 10 12 14Q12 17 8 17Q1 16 1 9Z" fill="#c4c4c4" />
            <circle cx="5" cy="6" r="1.5" fill="#aaa" /><circle cx="10" cy="4" r="1.5" fill="#aaa" /><circle cx="16" cy="5" r="1.5" fill="#aaa" /><circle cx="5" cy="12" r="1.5" fill="#aaa" />
          </svg>
          <span className="ml-[11px] w-[118px] tracking-[0.2px] text-[#555]">Gray</span>
          <Tri cls="fill-[#b4b4b4]" />
          <svg width="7" height="10" viewBox="0 0 7 10" fill="#bcbcbc" className="ml-[14px]"><path d="M6 0V10L0 5Z" /></svg>
          <svg width="7" height="10" viewBox="0 0 7 10" fill="#bcbcbc" className="ml-[12px]"><path d="M0 0V10L6 5Z" /></svg>
          <svg width="12" height="12" viewBox="0 0 12 12" className="ml-[13px]"><rect width="12" height="12" fill="#c8c8c8" /><rect x="4" y="2" width="4" height="4" fill="#eee" /><rect x="2" y="6" width="4" height="4" fill="#999" /></svg>
          <span className="ml-[14px] flex flex-col items-end">
            <svg width="14" height="10" viewBox="0 0 14 10" fill="#c4c4c4" stroke="#b0b0b0"><rect x="0.5" y="2.5" width="7" height="7" /><rect x="3.5" y="0.5" width="7" height="7" /><rect x="11" y="2" width="3" height="5" /></svg>
            <Dash cls="mt-[6px] !w-[7px] !h-[2px]" />
          </span>
        </div>
        <div className="mt-[10px] flex h-[22px] items-center">
          <span className="ml-[17px] flex h-[9px] w-[14px] items-center justify-center bg-[#dcdcdc] font-['Liberation_Mono',monospace] text-[7px] leading-none text-[#999]">[I]</span>
          <NumInput value="0.0" cls="ml-[13px] h-[22px] w-[96px]" />
          <svg width="14" height="16" viewBox="0 0 14 16" className="ml-[11px]"><circle cx="7" cy="6" r="6" fill="#c4c4c4" /><path d="M3 10H11L7 16Z" fill="#aaa" /></svg>
          <NumInput value="1.0" cls="ml-[13px] h-[22px] w-[95px]" />
        </div>
        <div className="relative ml-[17px] mt-[7px] h-[17px] w-[248px] border-y border-[#777] bg-gradient-to-r from-black via-[#808080] to-white">
          <svg width="248" height="17" viewBox="0 0 248 17" fill="#aaa" className="absolute left-0 top-[-1px]">
            <path d="M0 0H8L4 5ZM0 17H8L4 12ZM240 0H248L244 5ZM240 17H248L244 12Z" />
          </svg>
        </div>
        <div className="mt-[10px] flex h-[18px] items-center font-['Liberation_Mono',monospace] text-[11px] text-[#444]">
          <span className="ml-[37px]">0</span>
          <span className="ml-[8px] w-[35px]">[%]</span>
          <span className="relative ml-px flex h-[16px] w-[49px] items-center">
            <span className="h-[6px] w-[18px] bg-[#b8d0e8]" />
            <span className="h-[6px] flex-1 border border-[#b8d0e8]" />
            <svg width="15" height="16" viewBox="0 0 15 16" className="absolute left-[18px] top-0"><path d="M0.5 0.5H14.5V9L7.5 15.5L0.5 9Z" fill="#eeeeee" stroke="#777" /></svg>
          </span>
          <X size={24} strokeWidth={1} className="ml-[19px] text-[#aaa]" />
          <span className="ml-[15px]">100</span>
          <span className="ml-[10px]">[%]</span>
        </div>
        <div className="mt-[9px] flex h-[28px] items-center">
          <span className="ml-[5px] flex h-[28px] w-[24px] items-center justify-center rounded-[5px] bg-[#99c7f4]">
            <svg width="12" height="14" viewBox="0 0 12 14" fill="#b8b8b8"><rect width="5" height="5" /><rect x="7" y="3" width="5" height="5" /><rect y="9" width="5" height="5" /><rect x="7" y="9" width="5" height="5" /></svg>
          </span>
          <span className="ml-[9px] flex"><Tri cls="fill-[#b4b4b4]" /></span>
          <span className="ml-[10px] flex h-[24px] w-[24px] items-center justify-center rounded-[5px] bg-[#e2dfdf]">
            <svg width="12" height="14" viewBox="0 0 12 14"><path d="M1 1H7Q11 3 11 7Q11 11 7 13H1Z" fill="#ccc" stroke="#b0b0b0" /></svg>
          </span>
          <span className="ml-[59px] flex h-[28px] w-[24px] items-center justify-center rounded-[5px] bg-[#e2dfdf]">
            <svg width="12" height="12" viewBox="0 0 12 12" fill="none" stroke="#aaa"><path d="M0 2H12M0 5H12M0 8H12M0 11H12M2 0V12M5 0V12M8 0V12M11 0V12" /></svg>
          </span>
          <span className="ml-[9px] flex"><Tri cls="fill-[#b4b4b4]" /></span>
          <span className="ml-[9px] flex h-[28px] w-[24px] items-center justify-center rounded-[5px] bg-[#99c7f4]">
            <svg width="14" height="14" viewBox="0 0 14 14" fill="#b8b8b8"><rect width="9" height="8" /><rect x="6" y="5" width="2" height="8" /></svg>
          </span>
          <span className="ml-[9px] flex"><Tri cls="fill-[#b4b4b4]" /></span>
          <span className="ml-[3px] flex h-[28px] w-[25px] items-center justify-center rounded-[5px] bg-[#99c7f4]">
            <span className="h-[12px] w-[12px] rounded-[3px] border border-[#aaa] bg-[#ccc]" />
          </span>
        </div>
      </div>
      <div className="mt-[3px] flex h-[31px] w-[284px] items-center pl-[4px]">
        <Radio />
        <span className="ml-[4px]">Slice</span>
        <span className="ml-[7px] flex"><Radio on /></span>
        <span className="ml-[4px]">Volume</span>
        <span className="ml-[6px] flex"><Radio /></span>
        <span className="ml-[5px]">All</span>
        <span className="flex-1" />
        <span className="flex h-[30px] w-[31px] items-center justify-center rounded-[6px] border border-[#8a8a8a] bg-[#fafafa]">
          <svg width="18" height="18" viewBox="0 0 18 18"><path d="M6 1H16V17H10V14H6V11H1L6 7Z" fill="#3a98cc" stroke="#111" /><rect x="10" y="5" width="1.5" height="1.5" fill="#111" /></svg>
        </span>
      </div>
      <div className="mt-[7px] h-px w-[281px] bg-[#b0b0b0]" />
      <div className="mt-[7px] flex h-[15px] w-[277px] items-center justify-end">
        <Check />
        <span className="ml-[4px]">ACQ grouping</span>
      </div>
    </div>
  );
}

function Annotations() {
  const arrows = [
    "M165 55L128 82",
    "M230 52L192 80",
    "M293 52L255 80",
    "M812 366L779 326",
    "M900 615L881 595",
  ];
  const heads = [
    "M128 82L141 78L135 71Z",
    "M192 80L205 76L199 69Z",
    "M255 80L268 76L262 69Z",
    "M779 326L791 332L784 338Z",
    "M881 595L892 600L886 606Z",
  ];
  return (
    <>
      <svg width="1533" height="988" viewBox="0 0 1533 988" className="pointer-events-none absolute left-0 top-0">
        {arrows.map((d) => <path key={d} d={d} stroke="#f4484c" strokeWidth="2.2" />)}
        {heads.map((d) => <path key={d} d={d} fill="#f4484c" />)}
      </svg>
      <span className="absolute left-[772px] top-[419px] text-[24px] text-[#f4484c] [text-shadow:1px_1px_2px_rgba(0,0,0,0.4)]">Subject Selection</span>
      <span className="absolute left-[803px] top-[630px] text-[24px] text-[#f4484c] [text-shadow:1px_1px_2px_rgba(0,0,0,0.4)]">Series Selection</span>
    </>
  );
}

export default function App() {
  return (
    <div className="relative flex h-[988px] w-[1533px] flex-col overflow-hidden bg-[#eeeeee] font-['Liberation_Sans',sans-serif] text-[12px] leading-[15px] text-[#2e2e3e]">
      <TitleBar />
      <TopBar />
      <div className="flex h-[911px]">
        <Sidebar />
        <div className="h-[910px] w-[1453px] rounded-[10px] border border-[#9a9a9a] pl-[4px] pt-[3px]">
          <div className="flex h-[26px]">
            <TabBlue cls="w-[77px] justify-center pt-px text-[#222]">DATABASE</TabBlue>
            <TabWhite cls="ml-px w-[55px] justify-center pt-px text-[#222]">DICOM</TabWhite>
            <TabWhite cls="ml-px w-[96px] justify-center pt-px tracking-[0.2px] text-[#222]">AUTODETECT</TabWhite>
          </div>
          <div className="h-[871px] w-[1442px] rounded-b-[10px] border border-[#9a9a9a] pl-[5px] pt-[5px]">
            <DemoRow />
            <FilterRow />
            <div className="flex">
              <div className="flex w-[1140px] flex-col pt-[6px]">
                <SubjectsPanel />
                <Splitter cls="h-[11px]" />
                <SeriesPanel />
                <Splitter cls="h-[12px]" />
                <LoadPanel />
              </div>
              <PreviewPanel />
            </div>
          </div>
        </div>
      </div>
      <ModuleMenu cls="left-[213px] top-[595px] w-[134px] border-[#f04048]" checked="View" iconCol="w-[27px]" />
      <ModuleMenu cls="left-[430px] top-[590px] w-[141px] border-[#4a60f0]" checked="PXMod" iconCol="w-[32px] pl-[2px]" />
      <Annotations />
    </div>
  );
}
